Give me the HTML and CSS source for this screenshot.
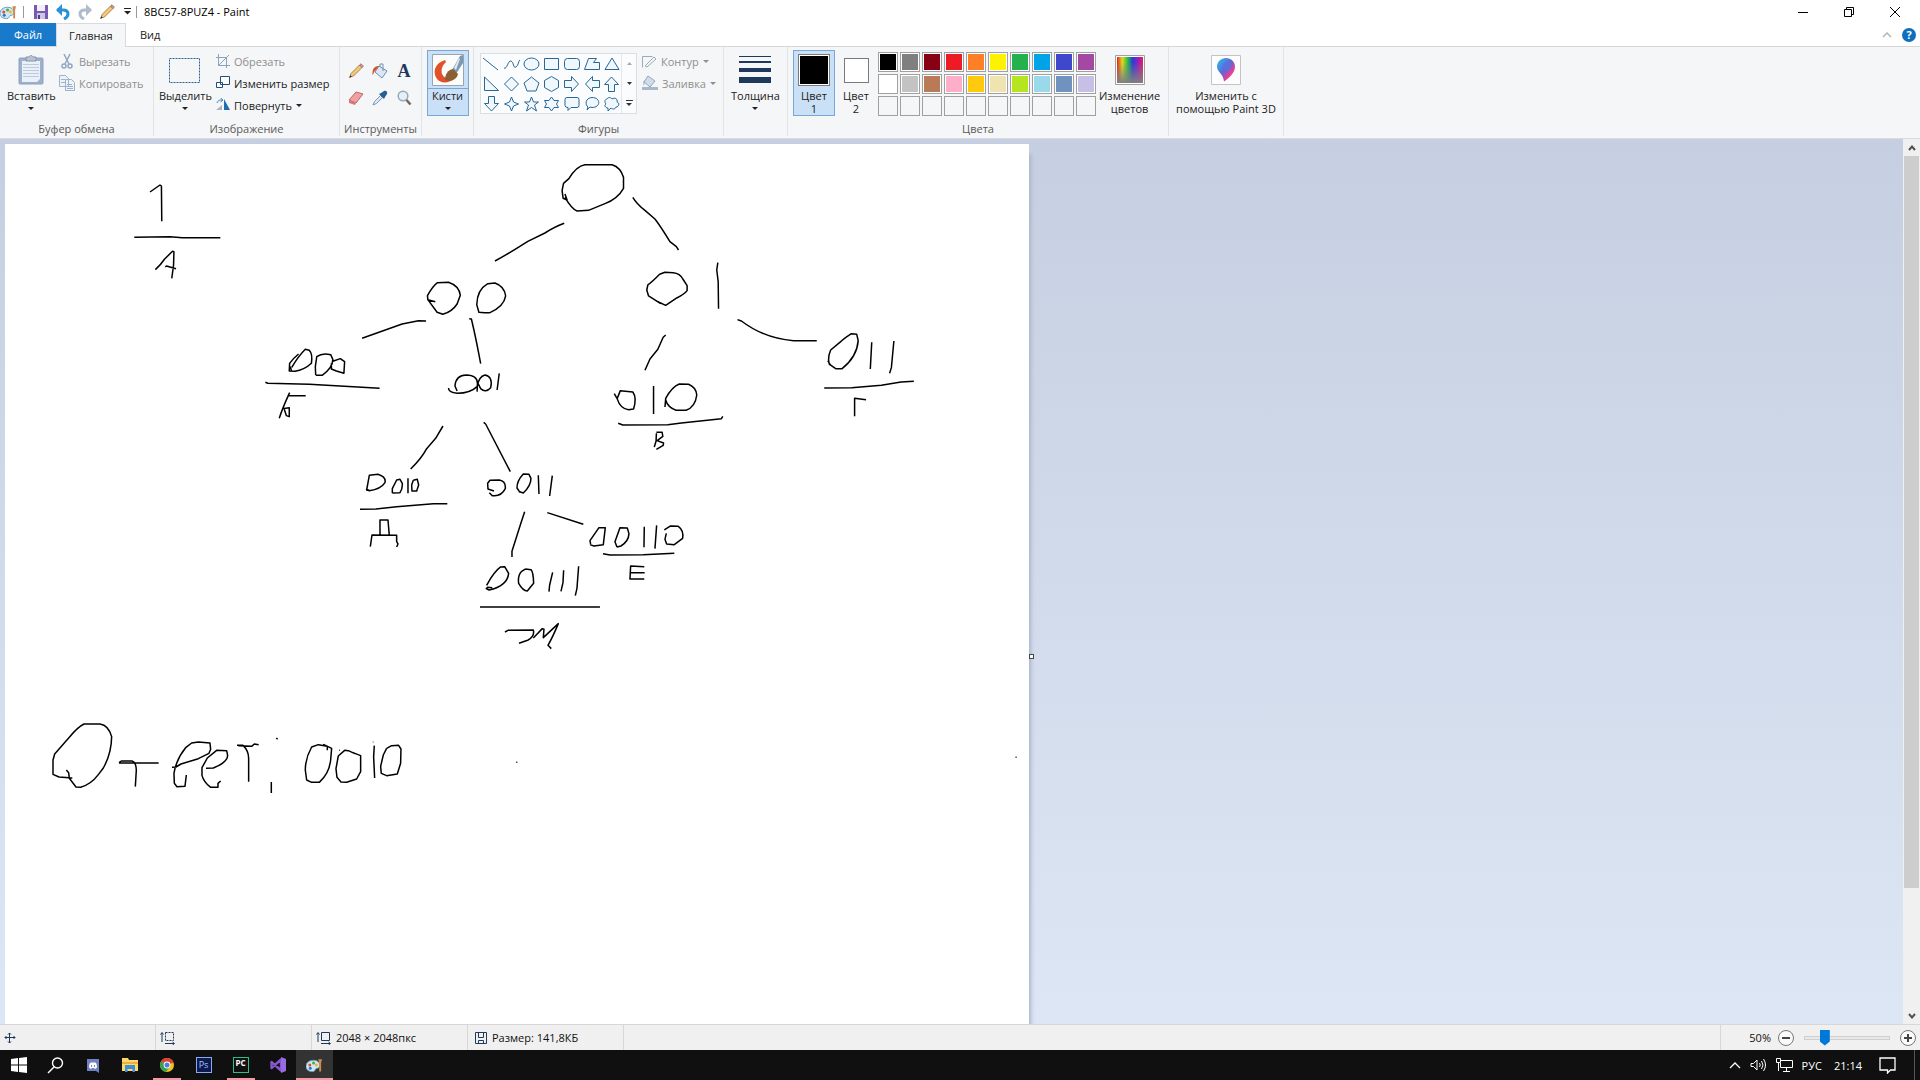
FILE: index.html
```html
<!DOCTYPE html>
<html lang="ru">
<head>
<meta charset="utf-8">
<title>8BC57-8PUZ4 - Paint</title>
<link rel="stylesheet" href="styles.css">
</head>
<body>
<svg class="defs" width="0" height="0" aria-hidden="true">
  <defs>
    <linearGradient id="rainbow"><stop offset="0" stop-color="#e02020"/><stop offset=".2" stop-color="#e8d820"/><stop offset=".4" stop-color="#30c040"/><stop offset=".6" stop-color="#2040d8"/><stop offset=".8" stop-color="#9020c0"/><stop offset="1" stop-color="#e02060"/></linearGradient>
    <linearGradient id="fade" x2="0" y2="1"><stop offset=".2" stop-color="#808080" stop-opacity="0"/><stop offset="1" stop-color="#808080"/></linearGradient>
    <linearGradient id="pin" x2="1" y2="1"><stop offset="0" stop-color="#28c4ee"/><stop offset=".45" stop-color="#5a68d8"/><stop offset=".7" stop-color="#e0409a"/><stop offset="1" stop-color="#ff7a30"/></linearGradient>
    <symbol id="pencil" viewBox="0 0 16 16"><path d="M2 14l1-3.500L11.500 2l2.500 2.500L5.500 13z" fill="#f5c878" stroke="#94703c" stroke-width=".8"/><path d="M11.500 2L13 .800l2.300 2.300L14 4.500z" fill="#e8a098" stroke="#8a6060" stroke-width=".8"/><path d="M1 15l1.300-2.800 1.500 1.500z" fill="#333"/></symbol>
    <symbol id="bucket" viewBox="0 0 18 16"><path d="M8 3l8 5-5 7-7-6z" fill="#dbe8f4" stroke="#6e8db0"/><path d="M9 4V1h3v7" fill="none" stroke="#7890aa"/><path d="M8 3C4 3 1 5 1.500 12c1 0 1-3 3-4.500z" fill="#d8502a"/></symbol>
    <symbol id="palette" viewBox="0 0 18 16"><path d="M8 3C3 3 0 6 0 9.500 0 13 3 15 7 15c3 0 2-2 3.500-3 1.500-.8 4-.5 4-3.500C14.500 5 12 3 8 3z" fill="#cfe8f2" stroke="#5a9ab8"/><circle cx="4" cy="8" r="1.600" fill="#e05030"/><circle cx="8" cy="6" r="1.600" fill="#50a840"/><circle cx="4.500" cy="11.500" r="1.600" fill="#3070d0"/><circle cx="11" cy="8" r="1.500" fill="#e8b820"/><path d="M14 15V6l-1-4h4l-1 4v9z" fill="#d08a4a"/></symbol>
    <symbol id="size" viewBox="0 0 16 14"><path d="M2 11V2M.500 3.500L2 1.500l1.500 2M5 12.500h9M12.500 11l2 1.500-2 1.500" fill="none" stroke="#1e395b"/></symbol>
  </defs>
</svg>

<header class="titlebar">
  <svg class="ic app" width="17" height="16"><use href="#palette"/></svg>
  <span class="rule"></span>
  <button class="quick" aria-label="Сохранить"><svg width="14" height="14"><path d="M0 0h14v14H0z" fill="#7a5ab0"/><path d="M3 0h8v6H3z" fill="#f2eefa"/><path d="M3 8h8v6H3z" fill="#cfc6e4"/><path d="M4 10h2v4H4z" fill="#54408a"/></svg></button>
  <button class="quick" aria-label="Отменить"><svg width="14" height="16"><path d="M1 6h6c4 0 5 2 5 4 0 3-2 4-4 5" fill="none" stroke="#2a90d8" stroke-width="3"/><path d="M0 6l6-6v12z" fill="#2a90d8"/></svg></button>
  <button class="quick" aria-label="Вернуть"><svg width="14" height="16"><path d="M13 6H7c-4 0-5 2-5 4 0 3 2 4 4 5" fill="none" stroke="#b0bccb" stroke-width="3"/><path d="M14 6L8 0v12z" fill="#b0bccb"/></svg></button>
  <button class="quick" aria-label="Карандаш"><svg width="16" height="16"><use href="#pencil"/></svg></button>
  <button class="quick narrow" aria-label="Настройка панели"><svg width="7" height="7"><path d="M0 .500h7" stroke="#222"/><path d="M0 3h7L3.500 6.500z" fill="#222"/></svg></button>
  <span class="rule"></span>
  <h1 class="title">8BC57-8PUZ4 - Paint</h1>
  <div class="winctl">
    <button aria-label="Свернуть"><svg width="10" height="10"><path d="M0 5.500h10" stroke="#000"/></svg></button>
    <button aria-label="Восстановить"><svg width="10" height="10" fill="none" stroke="#000"><path d="M.500 2.500h7v7h-7zM2.500 2V.500h7v7H8"/></svg></button>
    <button aria-label="Закрыть"><svg width="10" height="10" stroke="#000"><path d="M0 0l10 10M10 0L0 10"/></svg></button>
  </div>
</header>

<nav class="tabs">
  <button class="tab file">Файл</button>
  <button class="tab active">Главная</button>
  <button class="tab">Вид</button>
  <div class="tabs-right">
    <button class="bare" aria-label="Свернуть ленту"><svg width="10" height="6"><path d="M1 5l4-4 4 4" fill="none" stroke="#b5b5b5" stroke-width="1.500"/></svg></button>
    <button class="help" aria-label="Справка">?</button>
  </div>
</nav>

<section class="ribbon">
  <div class="group clipboard">
    <div class="items">
      <button class="big"><span class="pic"><svg width="26" height="30"><rect x="1" y="3" width="24" height="26" rx="1" fill="#9fb0cd" stroke="#8da0c0"/><path d="M4 6h18v18l-3 3H4z" fill="#eaf0f8"/><path d="M5 9.500h16M5 12.500h16M5 15.500h16M5 18.500h16M5 21.500h16" stroke="#bccbe0"/><path d="M8 2h3c1-2 3-2 4 0h3v4H8z" fill="#b9c3d3" stroke="#8492a8"/></svg></span>Вставить<i class="arrow"></i></button>
      <div class="stack">
        <button class="small off"><svg width="16" height="16" fill="none" stroke="#93a7c2" stroke-width="1.500"><path d="M5 1l5 10M11 1L6 11"/><circle cx="5" cy="13" r="2"/><circle cx="11" cy="13" r="2"/></svg>Вырезать</button>
        <button class="small off"><svg width="16" height="16" fill="#edf2f8" stroke="#9fb2cb"><path d="M.500.500h6l3 3v8h-9zM6.500 4.500h6l3 3v8h-9z"/><path d="M2 4.500h4M2 7.500h4M8 9.500h5M8 11.500h6M8 13.500h6"/></svg>Копировать</button>
      </div>
    </div>
    <h2>Буфер обмена</h2>
  </div>
  <div class="group image">
    <div class="items">
      <button class="big"><span class="pic"><svg width="31" height="25"><path d="M.500.500h30v24H.500z" fill="none" stroke="#2b5f94" stroke-dasharray="2 1"/></svg></span>Выделить<i class="arrow"></i></button>
      <div class="stack">
        <button class="small off"><svg width="14" height="14" fill="none" stroke="#8ba3bf"><path d="M2.500 0v11.500H14M0 3.500h10.500V14M2.500 11.500L13 1"/></svg>Обрезать</button>
        <button class="small"><svg width="14" height="14" fill="#fff" stroke="#1f4f7c"><path d="M4.500.500h9v8h-9zM.500 6.500h6v5h-6z"/></svg>Изменить размер</button>
        <button class="small"><svg width="14" height="14"><path d="M0 12h6V7z" fill="#a9b6c3"/><path d="M8 1l6 11H8z" fill="#1d6fae"/><path d="M1 5c1-3 3-3 5-3M4.500 0L7 2 4.500 4" fill="none" stroke="#2f86c5"/></svg>Повернуть<i class="arrow"></i></button>
      </div>
    </div>
    <h2>Изображение</h2>
  </div>
  <div class="group tools">
    <div class="items toolgrid">
      <button class="bare" aria-label="Карандаш"><svg width="16" height="16"><use href="#pencil"/></svg></button>
      <button class="bare" aria-label="Заливка цветом"><svg width="18" height="16"><use href="#bucket"/></svg></button>
      <button class="bare letter" aria-label="Текст">A</button>
      <button class="bare" aria-label="Ластик"><svg width="16" height="14"><path d="M1 9l7-8 7 2-7 9z" fill="#f0a0a0" stroke="#b86868"/><path d="M1 9v3l6 2 1-2z" fill="#d87878"/></svg></button>
      <button class="bare" aria-label="Палитра"><svg width="16" height="16"><path d="M1 15l1.500-3.500 6-6 2 2-6 6z" fill="#dbe8f4" stroke="#7b98b6"/><path d="M7 4l5 5 1-2 2-3c1-2-1-4-3-3L9 3z" fill="#285e96"/></svg></button>
      <button class="bare" aria-label="Масштаб"><svg width="15" height="16"><circle cx="6" cy="6" r="4.800" fill="#e2f0fa" stroke="#9aa8b6" stroke-width="1.500"/><path d="M9.500 10l4 4.500" stroke="#7a6458" stroke-width="2.500"/></svg></button>
    </div>
    <h2>Инструменты</h2>
  </div>
  <div class="group brushes">
    <div class="items">
      <button class="big on split"><span class="pic"><svg width="32" height="32"><path d="M.500.500h31v31H.500z" fill="#fcfcfa" stroke="#98a4b0"/><path d="M13 6C3 9 0 18 5 25c4 5 12 4 17 0-6 1-10-1-12-5-1-5 0-8 4-12z" fill="#e2502a"/><path d="M20 16L28 2l3-1v8l-7 11z" fill="#7b98b4"/><path d="M22 14l5-10 1 1-4 11z" fill="#dfe8f0"/><path d="M13 26c0-6 3-10 8-11l5 5c-1 5-6 8-13 6z" fill="#8b5e34"/></svg></span>Кисти<i class="arrow"></i></button>
    </div>
  </div>
  <div class="group shapes">
    <div class="items">
      <div class="gallery">
        <svg class="shapeset" width="140" height="60" fill="#f0f8fd" stroke="#2a6794">
          <path d="M2 4l15 12" fill="none"/><path d="M23 14c3 2 4-8 7-7s2 8 5 6 2-6 4-7" fill="none"/><ellipse cx="50.500" cy="10" rx="7.500" ry="6"/><path d="M63.500 4.500h14v11h-14z"/><rect x="83.500" y="4.500" width="15" height="11" rx="3"/><path d="M107.500 4.500h8l-3 4h6v7h-15z"/><path d="M131 4l7 11.500h-14z"/>
          <path d="M3.500 23v13.500h14z"/><path d="M30.500 23l7 7-7 7-7-7z"/><path d="M50.500 23l7.500 6-3 8h-9l-3-8z"/><path d="M70.500 22.500l7 4v7l-7 4-7-4v-7z"/><path d="M83.500 26.500h7v-4l7 7.500-7 7.500v-4h-7z"/><path d="M118.500 26.500h-7v-4l-7 7.500 7 7.500v-4h7z"/><path d="M127.500 37.500v-7h-4l7-7.500 7 7.500h-4v7z"/>
          <path d="M7.500 42.500v7h-4l7 7.500 7-7.500h-4v-7z"/><path d="M30.500 43l2 5 5 2-5 2-2 5-2-5-5-2 5-2z"/><path d="M50.500 43l2 5h5l-4 3 2 6-5-3.500-5 3.500 2-6-4-3h5z"/><path d="M70.500 43l2.500 3.500h4.500L75.500 50l2 3.500H73L70.500 57 68 53.500h-4.500l2-3.500-2-3.500H68z"/><path d="M86 43.500h10q2 0 2 2v6q0 2-2 2h-6l-3 3v-3q-3 0-3-2v-6q0-2 2-2z"/><path d="M107 53c-3-2-3-9 4-9.500 9 0 9 10 0 10l-2-.5-3 3z"/><path d="M126 45c1-2 4-2 5 0 3-2 6 0 5 3 3 1 2 5-1 5-1 3-4 2-5 1l-3 3v-3c-3 0-4-3-2-4-2-2-1-5 1-5z"/>
        </svg>
        <div class="galleryctl">
          <button class="bare" aria-label="Вверх"><svg width="5" height="3"><path d="M0 3h5L2.500 0z" fill="#aaa"/></svg></button>
          <button class="bare" aria-label="Вниз"><svg width="5" height="3"><path d="M0 0h5L2.500 3z" fill="#333"/></svg></button>
          <button class="bare" aria-label="Все фигуры"><svg width="7" height="6"><path d="M0 .500h7" stroke="#333"/><path d="M0 3h6L3 6z" fill="#333"/></svg></button>
        </div>
      </div>
      <div class="stack">
        <button class="small off"><svg width="15" height="14" fill="none" stroke="#9aabc0"><path d="M.500 2.500h10M.500 2.500v11M3 12l9-9 2 2-9 8z"/></svg>Контур<i class="arrow"></i></button>
        <button class="small off"><svg width="16" height="16"><path d="M0 12h16v3H0z" fill="#a9b8cc"/><path d="M6 1l7 5-5 6-6-5z" fill="#d2dce9" stroke="#93a7c0"/><path d="M3 5c-2 1-2 4-1 6z" fill="#93a7c0"/></svg>Заливка<i class="arrow"></i></button>
      </div>
    </div>
    <h2>Фигуры</h2>
  </div>
  <div class="group width">
    <div class="items">
      <button class="big"><span class="pic"><svg width="32" height="28" fill="#1e395b"><path d="M0 0h32v1H0zM0 5h32v2H0zM0 12h32v4H0zM0 21h32v6H0z"/></svg></span>Толщина<i class="arrow"></i></button>
    </div>
  </div>
  <div class="group colors">
    <div class="items">
      <button class="big on"><span class="pic"><span class="current black"></span></span>Цвет<br>1</button>
      <button class="big"><span class="pic"><span class="current white"></span></span>Цвет<br>2</button>
      <div class="swatches">
        <button class="c1" aria-label="Черный"></button><button class="c2" aria-label="Серый"></button><button class="c3" aria-label="Темно-красный"></button><button class="c4" aria-label="Красный"></button><button class="c5" aria-label="Оранжевый"></button><button class="c6" aria-label="Желтый"></button><button class="c7" aria-label="Зеленый"></button><button class="c8" aria-label="Бирюзовый"></button><button class="c9" aria-label="Индиго"></button><button class="c10" aria-label="Лиловый"></button>
        <button class="c11" aria-label="Белый"></button><button class="c12" aria-label="Светло-серый"></button><button class="c13" aria-label="Коричневый"></button><button class="c14" aria-label="Розовый"></button><button class="c15" aria-label="Золотой"></button><button class="c16" aria-label="Светло-желтый"></button><button class="c17" aria-label="Травяной"></button><button class="c18" aria-label="Светло-бирюзовый"></button><button class="c19" aria-label="Сизый"></button><button class="c20" aria-label="Сиреневый"></button>
        <button class="empty" aria-label="Свой цвет 1"></button><button class="empty" aria-label="Свой цвет 2"></button><button class="empty" aria-label="Свой цвет 3"></button><button class="empty" aria-label="Свой цвет 4"></button><button class="empty" aria-label="Свой цвет 5"></button><button class="empty" aria-label="Свой цвет 6"></button><button class="empty" aria-label="Свой цвет 7"></button><button class="empty" aria-label="Свой цвет 8"></button><button class="empty" aria-label="Свой цвет 9"></button><button class="empty" aria-label="Свой цвет 10"></button>
      </div>
      <button class="big edit"><span class="pic"><svg width="30" height="30"><path d="M.500.500h29v29H.500z" fill="#fff" stroke="#a0a0a0"/><path d="M2 2h26v26H2z" fill="url(#rainbow)"/><path d="M2 2h26v26H2z" fill="url(#fade)"/></svg></span>Изменение<br>цветов</button>
    </div>
    <h2>Цвета</h2>
  </div>
  <div class="group p3d">
    <div class="items">
      <button class="big"><span class="pic"><svg width="30" height="30"><path d="M.500.500h29v29H.500z" fill="#fdfdfd" stroke="#c4c4c4"/><path d="M15 3c-5 0-9 4-9 8.500 0 6 6 6 7 15 6-4 11-9 11-15C24 7 20 3 15 3z" fill="url(#pin)"/><circle cx="16" cy="11" r="4" fill="#5a70dc"/></svg></span>Изменить с<br>помощью Paint 3D</button>
    </div>
  </div>
</section>

<main class="workspace">
  <div class="view">
    <div class="canvas">
      <svg class="drawing" width="1024" height="1024" viewBox="0 0 1024 1024" role="img" aria-label="Двоичное дерево кодов">
        <g transform="translate(115 6) scale(.3571 .3333)">
          <path d="M84 126L112 105 116 108 117 214M40 262L140 260 175 263 281 263M99 359Q115 343 125 327L147 304 151 305 150 345 145 385M127 351L130 348 157 356"/>
          <path d="M1246 132L1252 150 1241 145 1238 122 1242 100 1257 86Q1278 48 1302 44L1378 44Q1402 52 1410 82L1410 115Q1394 146 1358 161L1312 181 1280 183Q1265 177 1246 142"/>
          <path d="M1244 220Q1220 229 1190 249L1142 274Q1085 313 1050 333M1436 142Q1447 162 1470 181L1498 207Q1514 229 1540 275L1558 290 1564 300"/>
          <path d="M883 455L862 449 861 437Q876 408 889 398L920 397Q950 408 953 436L944 462Q930 485 904 493L888 487 862 449M1021 488L1036 488Q1075 470 1080 438 1077 409 1050 399L1030 401Q1000 419 999 464L1005 487 1021 488"/>
          <path d="M857 513L836 512 790 522 678 565M978 506L984 507Q996 560 1010 641M477 650L480 662M481 652Q500 618 519 598L530 601Q540 612 536 640 516 660 490 664L474 663 475 640Q485 625 500 612M549 676L566 676Q596 654 596 628L590 614Q566 608 551 620L547 650 548 676M596 634L617 626 629 635 627 670 606 663 592 657 592 640"/>
          <path d="M407 697L414 700 530 703 727 715M446 805Q454 777 475 728M472 737L520 737M454 776L474 773 474 800 466 797 460 778M944 723L938 708Q940 676 970 675 1001 676 1001 700L1000 725M1000 710Q1005 679 1022 675 1045 680 1038 713 1024 730 1010 716L1000 695M1000 710Q980 730 945 730 919 727 920 714M1062 670L1056 720"/>
        </g>
        <g transform="translate(495 6) scale(.3571 .3333)">
          <path d="M450 461L416 438 411 420 414 405Q425 397 447 373L462 367 485 368Q504 370 512 387L524 407 524 422Q516 433 495 444L464 466 438 453M610 338L607 360 611 395 612 476M464 555L457 562 442 598 420 627 406 661"/>
          <path d="M320 731L328 746Q337 777 360 779L374 777Q384 744 372 726L337 722 328 746M430 708L430 792M462 771L464 745Q482 710 502 702L528 703Q549 712 551 735 547 771 521 781L493 781Q469 771 464 750M331 820L344 825 470 824 508 819 620 806 624 799"/>
          <path d="M438 850L437 874 432 891M438 847L454 847 456 859 440 872 458 879 457 886 438 898M665 509L676 513Q740 565 822 572L887 572M918 632L925 645 940 656 958 656Q1000 620 1003 572L999 553 984 551Q965 564 955 574L926 600Q916 625 923 645M1041 577L1037 657M1103 573L1096 653 1091 670M908 714L985 713 1068 706 1123 696 1159 694M993 799L993 745 1025 749"/>
        </g>
        <g transform="translate(245 266) scale(.3333)">
          <path d="M579 48L557 85 530 116Q515 145 482 177M701 37L707 42 781 185M348 237L359 242 350 240 358 196 384 193Q409 201 405 218 392 238 358 242M427 249L450 248Q458 236 457 220L450 208 440 210 427 236 427 249M474 205L474 250M490 211L502 208 506 225 500 243 486 243 485 225 490 211"/>
          <path d="M330 298L378 297 440 290 550 281 592 281M361 410L366 375 440 376 440 395 444 402 440 411M390 375L390 330 414 330 418 377"/>
          <path d="M732 243L714 237 713 220 720 211 748 210Q768 213 766 236 753 261 727 257L718 248M805 244L820 249Q843 228 843 205L837 193 820 192Q801 212 801 234L810 247M865 196L867 252M907 197L899 258M824 305L811 345 786 424 786 441M892 308L1000 343"/>
          <path d="M1022 402L1020 392 1047 353 1066 353 1060 404 1032 408 1020 404M1101 411L1113 408Q1136 394 1137 371L1132 354 1110 353 1095 395 1101 411M1183 350L1182 412M1220 346L1215 416M1243 360L1262 348 1285 349Q1302 361 1298 385L1273 404 1250 402 1245 388 1249 370M1059 431L1080 435 1180 434 1273 430M1183 470L1142 468 1140 507 1183 507M1142 488L1184 488"/>
          <path d="M727 533L713 532 709 536 717 540Q772 528 776 490L764 470 752 471Q732 485 710 526M827 477L814 485Q803 497 806 520 819 543 832 543L851 520Q850 485 843 479L827 477M908 487L899 525 897 545M941 481L939 518 933 544M986 469L981 535 976 557M690 591L1050 591M765 666L774 661 850 660Q855 677 835 690L807 700M850 684L877 656 882 658 880 683 925 641Q909 680 894 706L904 716"/>
        </g>
        <g transform="translate(35 566) scale(.3333)">
          <path d="M79 180L86 188 88 205 108 231 122 232Q153 223 175 194L190 174Q214 131 215 80 206 46 180 42L132 42Q112 52 88 82L44 132 39 150 39 193 57 201 97 204M237 158L244 153 276 153Q288 156 289 180L286 230M237 159L356 159M396 172L408 171 423 162 475 146 507 130 512 118 510 99 475 96 455 99 438 112Q408 149 402 190L403 220 411 230 435 229 439 195"/>
          <path d="M498 175L520 174Q563 157 563 136L560 122 530 121 502 144 486 173 486 196Q491 216 512 232L534 232 534 220 542 213M591 106L609 106Q626 122 626 145L626 215M595 107L635 109 643 102 656 104M694 216L694 249M709 84L713 88M862 121L862 109 835 104 815 111Q796 145 796 180L800 210 815 217 838 217Q868 190 872 150L875 115 850 103M945 131L925 122 914 121 895 138 888 176 891 202 903 216 920 217 950 207 962 185 962 137 939 128M1003 107L1001 140 1004 204M1040 115L1055 107 1076 106 1083 117 1082 160 1072 192 1040 197 1024 190 1022 169 1030 135 1040 115M898 121h2M1000 95v2M1429 157h3M2927 142h3"/>
        </g>
      </svg>
      <span class="handle"></span>
    </div>
  </div>
  <div class="scroll">
    <button aria-label="Прокрутить вверх"><svg width="8" height="6"><path d="M1 5l3-3.500L7 5" fill="none" stroke="#505050" stroke-width="2"/></svg></button>
    <div class="track"><div class="thumb"></div></div>
    <button aria-label="Прокрутить вниз"><svg width="8" height="6"><path d="M1 1l3 3.500L7 1" fill="none" stroke="#505050" stroke-width="2"/></svg></button>
  </div>
</main>

<footer class="status">
  <div class="cell"><svg width="12" height="12" fill="none" stroke="#1e395b"><path d="M5.500 1v10M1 5.500h10M4 2.500L5.500 1 7 2.500M4 9.500L5.500 11 7 9.500M2.500 4L1 5.500 2.500 7M9.500 4L11 5.500 9.500 7"/></svg></div>
  <div class="cell"><svg width="16" height="14"><use href="#size"/><path d="M5.500 1.500h8v8h-8z" fill="none" stroke="#1e395b" stroke-dasharray="2 1"/></svg></div>
  <div class="cell"><svg width="16" height="14"><use href="#size"/><path d="M5.500 1.500h8v8h-8z" fill="none" stroke="#1e395b"/></svg>2048 × 2048пкс</div>
  <div class="cell file-size"><svg width="12" height="12" fill="none" stroke="#1e395b"><path d="M.500.500h11v11H.500zM3.500.500v5h5v-5M3.500 11.500v-3h5v3"/></svg>Размер: 141,8КБ</div>
  <div class="zoom">
    <label for="zoom">50%</label>
    <button class="bare" aria-label="Уменьшить"><svg width="16" height="16" fill="#fafafa" stroke="#777"><circle cx="8" cy="8" r="7.500"/><path d="M4 8h8" stroke="#444" stroke-width="2"/></svg></button>
    <input id="zoom" type="range" min="0" max="100" value="20">
    <button class="bare" aria-label="Увеличить"><svg width="16" height="16" fill="#fafafa" stroke="#777"><circle cx="8" cy="8" r="7.500"/><path d="M4 8h8M8 4v8" stroke="#444" stroke-width="2"/></svg></button>
  </div>
</footer>

<div class="taskbar">
  <button aria-label="Пуск"><svg width="16" height="16" fill="#fff"><path d="M0 2l7-1v6.500H0zM8 1l8-1v7.500H8zM0 8.500h7V15l-7-1zM8 8.500h8V16l-8-1z"/></svg></button>
  <button aria-label="Поиск"><svg width="17" height="17" fill="none" stroke="#fff" stroke-width="1.400"><circle cx="10.500" cy="6" r="5"/><path d="M7 10l-6 6"/></svg></button>
  <button aria-label="Discord"><svg width="12" height="15"><path d="M0 1h12v14l-3-2H0z" fill="#7080c0"/><path d="M2 9.500C2 6 3 4.500 4 4.500h4c1 0 2 1.500 2 5L8 11l-1-1H5l-1 1z" fill="#fff"/><path d="M4 7h1v2H4zM7 7h1v2H7z" fill="#7080c0"/></svg></button>
  <button aria-label="Проводник"><svg width="16" height="14"><path d="M0 0h6l1 2h9v11H0z" fill="#ffd868"/><path d="M0 4h16v2H0z" fill="#e8b040"/><path d="M3 7h10v7h-2.500v-3h-5v3H3z" fill="#3a90d8"/></svg></button>
  <button class="run" aria-label="Chrome"><svg width="14" height="14"><circle cx="7" cy="7" r="7" fill="#f0c020"/><path d="M7 7L1 3.500A7 7 0 0 1 13.500 4.500z" fill="#e04030"/><path d="M7 7L1 3.500A7 7 0 0 0 6 14l3.500-5z" fill="#38a050"/><circle cx="7" cy="7" r="3.400" fill="#fff"/><circle cx="7" cy="7" r="2.500" fill="#4080e8"/></svg></button>
  <button aria-label="Photoshop"><span class="tile ps">Ps</span></button>
  <button class="run" aria-label="PyCharm"><span class="tile pc">PC</span></button>
  <button aria-label="Visual Studio"><svg width="16" height="16"><path d="M1.500 5v6L11 2.500v11z" fill="none" stroke="#8458cc" stroke-width="2.400" stroke-linejoin="round"/><path d="M11 0l5 2v12l-5 2z" fill="#9a6ae0"/></svg></button>
  <button class="run current-app" aria-label="Paint"><svg width="17" height="16"><use href="#palette"/></svg></button>
  <div class="tray">
    <button class="bare" aria-label="Скрытые значки"><svg width="12" height="7"><path d="M1 6l5-5 5 5" fill="none" stroke="#fff" stroke-width="1.300"/></svg></button>
    <button class="bare" aria-label="Звук"><svg width="17" height="14" fill="none" stroke="#fff"><path d="M1 5.500h2.500L7 2v10L3.500 8.500H1zM9.500 5q1.500 2 0 4M11.500 3q3 4 0 8M13.500 1q4 6 0 12"/></svg></button>
    <button class="bare" aria-label="Сеть"><svg width="17" height="14" fill="none" stroke="#fff"><path d="M5 2.500h11.500v7h-12V5M.500.500h4v4h-4zM2.500 5v8M10.500 9.500v4M7 13.500h7"/></svg></button>
    <span>РУС</span>
    <time>21:14</time>
    <button class="bare" aria-label="Уведомления"><svg width="17" height="17" fill="none" stroke="#fff" stroke-width="1.300"><path d="M1 1h15v12h-4.500L8.500 16v-3H1z"/></svg></button>
    <span class="desktop"></span>
  </div>
</div>
</body>
</html>
```
FILE: styles.css
```css
* { box-sizing: border-box; }
body {
  margin: 0;
  height: 100vh;
  display: flex;
  flex-direction: column;
  overflow: hidden;
  background: #fff;
  color: #222;
  font: 11px/13px "Open Sans", "Noto Sans", sans-serif;
}
button { font: inherit; color: inherit; border: 0; background: none; padding: 0; margin: 0; }
svg { display: block; flex: none; }
.defs { position: absolute; }
h1, h2 { margin: 0; font: inherit; }
.bare { display: flex; align-items: center; justify-content: center; }

/* Title bar */
.titlebar { flex: none; height: 23px; display: flex; align-items: center; }
.app { margin-right: 6px; }
.rule { width: 1px; height: 12px; background: #999; }
.quick { width: 22px; height: 22px; display: flex; align-items: center; justify-content: center; }
.quick:nth-of-type(1) { margin-left: 6px; }
.narrow { width: 18px; }
.title { color: #000; margin-left: 7px; }
.winctl { margin-left: auto; padding-right: 2px; display: flex; }
.winctl button { width: 46px; height: 20px; display: flex; align-items: center; justify-content: center; }

/* Tabs */
.tabs { flex: none; height: 24px; display: flex; border-bottom: 1px solid #d5d6d8; }
.tab { height: 23px; padding: 0 14px; }
.tab.file { width: 56px; background: #1979ca; color: #fff; }
.tab.active { width: 70px; height: 24px; padding: 0 12px; text-align: left; background: #f5f6f7; border: 1px solid #d9dadc; border-bottom: 0; }
.tabs-right { margin-left: auto; padding-right: 4px; display: flex; align-items: center; gap: 10px; }
.help { width: 14px; height: 14px; border-radius: 50%; background: #0f6fbd; color: #fff; font-weight: 700; line-height: 14px; }

/* Ribbon */
.ribbon { flex: none; height: 92px; display: flex; background: #f5f6f7; border-bottom: 1px solid #dadbdc; }
.group { display: flex; flex-direction: column; margin-bottom: 2px; border-right: 1px solid #e2e3e4; }
.items { flex: 1; display: flex; align-items: flex-start; padding-top: 3px; }
.group h2 { height: 14px; text-align: center; color: #5a5a5a; white-space: nowrap; }
.clipboard { width: 154px; }
.image { width: 186px; }
.tools { width: 82px; }
.brushes { width: 52px; }
.shapes { width: 250px; }
.width { width: 64px; }
.colors { width: 381px; }
.p3d { width: 115px; }

.big { min-width: 42px; height: 66px; display: block; text-align: center; white-space: nowrap; }
.pic { height: 38px; display: flex; align-items: center; justify-content: center; }
.arrow { display: block; width: 0; border: 3px solid transparent; border-top: 3px solid currentColor; border-bottom: 0; }
.big .arrow { margin: 5px auto; }
.on { background: #c9e0f7; border: 1px solid #78a6d6; }
.on .pic { height: 37px; }
.split .pic { border-bottom: 1px solid #78a6d6; }
.small { height: 22px; display: flex; align-items: center; gap: 4px; white-space: nowrap; }
.off { color: #8f8f8f; }
.clipboard .items { padding-left: 7px; gap: 4px; }
.clipboard .big { width: 48px; }
.image .items { padding-left: 5px; gap: 6px; }
.image .big { width: 51px; }
.toolgrid { display: grid; grid-template-columns: repeat(3, 24px); grid-auto-rows: 27px; padding-left: 4px; align-content: start; padding-top: 10px; align-items: center; }
.letter { font: 700 18px/20px "Liberation Serif", serif; color: #1e395b; }
.brushes .items, .width .items, .p3d .items { justify-content: center; }
.shapes .items { padding-left: 6px; gap: 5px; }
.gallery { display: flex; margin-top: 3px; height: 61px; border: 1px solid #dcdfe2; background: #fafcfd; }
.galleryctl { width: 15px; display: grid; grid-template-rows: repeat(3, 1fr); border-left: 1px solid #e4e6e8; }
.colors .items { padding-left: 5px; }
.current { border: 1px solid #7a7a7a; }
.black { width: 32px; height: 32px; background: #000; box-shadow: inset 0 0 0 1px #fff; }
.white { width: 25px; height: 25px; background: #fff; }
.swatches { display: grid; grid-template-columns: repeat(10, 20px); gap: 2px; grid-auto-rows: 20px; margin: 2px 3px 0 1px; }
.swatches button { border: 1px solid #a0a0a0; box-shadow: inset 0 0 0 1px #fff; }
.swatches .empty { box-shadow: none; }
.c1 { background: #000; } .c2 { background: #7f7f7f; } .c3 { background: #880015; } .c4 { background: #ed1c24; } .c5 { background: #ff7f27; }
.c6 { background: #fff200; } .c7 { background: #22b14c; } .c8 { background: #00a2e8; } .c9 { background: #3f48cc; } .c10 { background: #a349a4; }
.c11 { background: #fff; } .c12 { background: #c3c3c3; } .c13 { background: #b97a57; } .c14 { background: #ffaec9; } .c15 { background: #ffc90e; }
.c16 { background: #efe4b0; } .c17 { background: #b5e61d; } .c18 { background: #99d9ea; } .c19 { background: #7092be; } .c20 { background: #c8bfe7; }

/* Workspace */
.workspace { flex: 1; min-height: 0; display: flex; }
.view { flex: 1; min-width: 0; overflow: hidden; padding: 5px 0 0 5px; background: linear-gradient(#c6cfe1, #dce6f4); }
.canvas { position: relative; width: 1024px; height: 1024px; background: #fff; box-shadow: 4px 8px 4px -2px #a8b5c9; }
.drawing path { fill: none; stroke: #000; stroke-width: 1.5px; stroke-linejoin: round; vector-effect: non-scaling-stroke; }
.handle { position: absolute; left: 100%; top: 50%; width: 5px; height: 5px; margin-top: -2px; border: 1px solid #444; background: #fff; }
.scroll { width: 17px; display: flex; flex-direction: column; background: #f0f0f0; }
.scroll button { height: 17px; display: flex; align-items: center; justify-content: center; }
.track { flex: 1; padding: 0 1px; }
.thumb { height: 86%; background: #cdcdcd; }

/* Status bar */
.status { flex: none; height: 26px; display: flex; background: #f0f0f0; border-top: 1px solid #d7d7d7; color: #111; }
.cell { width: 156px; padding-left: 4px; display: flex; align-items: center; gap: 4px; border-right: 1px solid #d7d7d7; }
.file-size { padding-left: 7px; gap: 5px; }
.zoom { display: flex; align-items: center; margin-left: auto; width: 200px; padding-right: 4px; justify-content: flex-end; gap: 7px; border-left: 1px solid #d7d7d7; }
.zoom input { appearance: none; width: 92px; height: 20px; margin: 0; padding: 0 3px; background: none; }
.zoom input::-webkit-slider-runnable-track { height: 4px; border: 1px solid #cfcfcf; background: #e8e8e8; }
.zoom input::-webkit-slider-thumb { appearance: none; width: 10px; height: 16px; margin-top: -7px; background: #0078d7; clip-path: polygon(0 0, 100% 0, 100% 75%, 50% 100%, 0 75%); }
.cell, .zoom, .title, .tray { font-size: 11px; }

/* Taskbar */
.taskbar { flex: none; height: 30px; display: flex; background: #101010; color: #fff; }
.taskbar > button { width: 37px; display: flex; align-items: center; justify-content: center; }
.run { background: linear-gradient(#f29ba6, #f29ba6) center bottom / 28px 2px no-repeat; }
.current-app { background-color: #333; background-size: 100% 2px; }
.tile { width: 16px; height: 16px; font-size: 9px; line-height: 13px; border: 1px solid #8aaaf0; background: #0c1a50; color: #a8c4ff; }
.pc { border-color: #28c088; background: #111; color: #fff; font-weight: 700; font-size: 8px; line-height: 10px; }
.tray { margin-left: auto; padding-right: 5px; display: flex; align-items: center; gap: 9px; }
.tray time { margin: 0 8px 0 3px; }
.desktop { width: 1px; height: 30px; margin-left: 9px; background: #555; }
```
